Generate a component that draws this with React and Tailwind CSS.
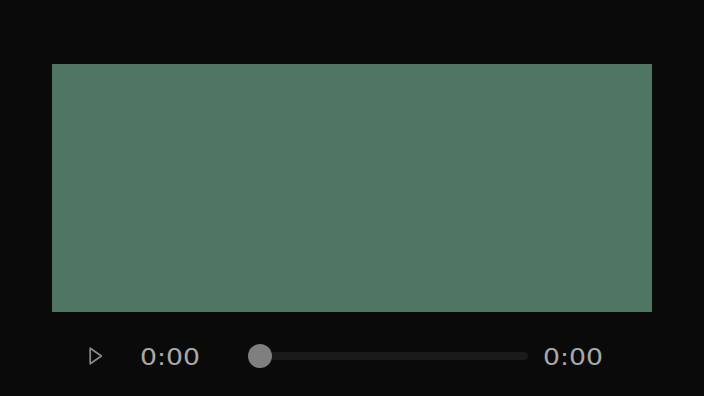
import React from "react";

const PlayIcon = () => (
  <svg width="14" height="18" viewBox="0 0 14 18" fill="none">
    <path
      d="M1.2 1.2 L12.4 9 L1.2 16.8 Z"
      stroke="#8a8a8a"
      strokeWidth="1.7"
      strokeLinejoin="round"
    />
  </svg>
);

export default function App() {
  return (
    <div className="w-[704px] h-[396px] bg-[#0a0a0a] pt-16 px-[52px] font-['DejaVu_Sans',sans-serif]">
      <div className="h-[248px] bg-[#4e7662]" />
      <div className="mt-8 h-6 flex items-center">
        <button className="ml-[37px] w-[14px] h-[18px] flex items-center">
          <PlayIcon />
        </button>
        <div className="ml-[37px] w-[108px]">
          <span className="inline-block origin-left translate-y-[2px] scale-x-[1.16] text-[23px] leading-6 text-[#a9a9a9]">
            0:00
          </span>
        </div>
        <div className="relative w-[280px] h-6 flex items-center">
          <div className="absolute left-3 right-0 h-2 rounded-full bg-[#1a1a1a]" />
          <div className="absolute left-0 w-6 h-6 rounded-full bg-[#7f7f7f]" />
        </div>
        <div className="ml-[15px]">
          <span className="inline-block origin-left translate-y-[2px] scale-x-[1.16] text-[23px] leading-6 text-[#a9a9a9]">
            0:00
          </span>
        </div>
      </div>
    </div>
  );
}
